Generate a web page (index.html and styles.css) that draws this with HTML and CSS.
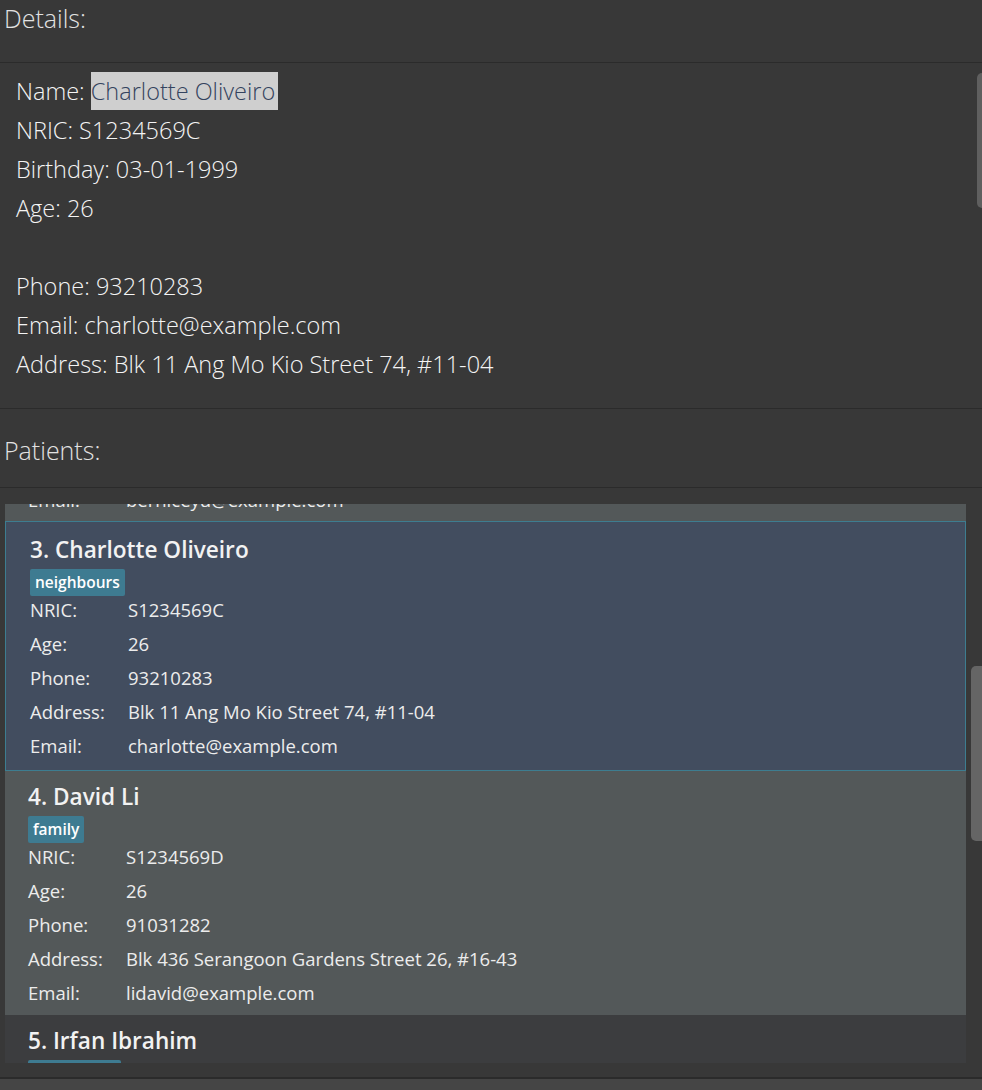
FILE: index.html
```html
<!DOCTYPE html>
<html>
<head>
<meta charset="utf-8">
<link rel="stylesheet" href="styles.css">
</head>
<body>
<div class="app">
  <div class="header header-details">Details:</div>
  <div class="details">
    <div class="details-text">
      <div class="line">Name: <span class="sel">Charlotte Oliveiro</span></div>
      <div class="line">NRIC: S1234569C</div>
      <div class="line">Birthday: 03-01-1999</div>
      <div class="line">Age: 26</div>
      <div class="line">&nbsp;</div>
      <div class="line">Phone: 93210283</div>
      <div class="line">Email: charlotte@example.com</div>
      <div class="line">Address: Blk 11 Ang Mo Kio Street 74, #11-04</div>
    </div>
    <div class="vbar vbar-details"><div class="thumb thumb-details"></div></div>
  </div>
  <div class="header header-patients">Patients:</div>
  <div class="list-area">
    <div class="viewport">
      <div class="list">
        <div class="cell cell-light cell-first">
          <div class="row row-cut"><span class="lbl">Email:</span><span>berniceyu@example.com</span></div>
        </div>
        <div class="cell cell-selected">
          <div class="title">3. Charlotte Oliveiro</div>
          <div class="tags"><span class="tag">neighbours</span></div>
          <div class="row"><span class="lbl">NRIC:</span><span>S1234569C</span></div>
          <div class="row"><span class="lbl">Age:</span><span>26</span></div>
          <div class="row"><span class="lbl">Phone:</span><span>93210283</span></div>
          <div class="row"><span class="lbl">Address:</span><span>Blk 11 Ang Mo Kio Street 74, #11-04</span></div>
          <div class="row"><span class="lbl">Email:</span><span>charlotte@example.com</span></div>
        </div>
        <div class="cell cell-light">
          <div class="title">4. David Li</div>
          <div class="tags"><span class="tag">family</span></div>
          <div class="row"><span class="lbl">NRIC:</span><span>S1234569D</span></div>
          <div class="row"><span class="lbl">Age:</span><span>26</span></div>
          <div class="row"><span class="lbl">Phone:</span><span>91031282</span></div>
          <div class="row"><span class="lbl">Address:</span><span>Blk 436 Serangoon Gardens Street 26, #16-43</span></div>
          <div class="row"><span class="lbl">Email:</span><span>lidavid@example.com</span></div>
        </div>
        <div class="cell cell-dark">
          <div class="title">5. Irfan Ibrahim</div>
          <div class="tags"><span class="tag">classmates</span></div>
        </div>
      </div>
    </div>
    <div class="vbar vbar-list"><div class="thumb thumb-list"></div></div>
  </div>
  <div class="footer"></div>
</div>
</body>
</html>
```
FILE: styles.css
```css
html, body {
  margin: 0;
  padding: 0;
  background: #383838;
}
.app {
  width: 982px;
  height: 1090px;
  display: flex;
  flex-direction: column;
  overflow: hidden;
  font-family: "Open Sans", "Noto Sans", sans-serif;
  color: #ffffff;
}
.header {
  box-sizing: border-box;
  background: #383838;
  border-bottom: 1px solid #2b2b2b;
  color: #e2e2e2;
  font-weight: 300;
  font-size: 25px;
  padding-left: 4px;
  flex: none;
}
.header-details {
  height: 63px;
  line-height: 36px;
}
.header-patients {
  height: 79px;
  padding-top: 23px;
  line-height: 36px;
}
.details {
  height: 346px;
  box-sizing: border-box;
  border-bottom: 1px solid #2b2b2b;
  display: flex;
  flex: none;
}
.details-text {
  flex: 1;
  padding: 9px 0 0 16px;
  font-weight: 300;
  font-size: 23.5px;
  line-height: 39px;
  color: #f4f4f4;
}
.sel {
  background: #cfcfcf;
  color: #34435e;
  display: inline-block;
  line-height: 38px;
  padding-right: 3px;
}
.vbar {
  flex: none;
  display: flex;
  flex-direction: column;
}
.vbar-details {
  width: 5px;
  padding-top: 10px;
}
.thumb {
  border-radius: 5px 0 0 5px;
}
.thumb-details {
  height: 135px;
  background: #5f5f5f;
}
.list-area {
  flex: none;
  height: 591px;
  box-sizing: border-box;
  border-bottom: 2px solid #2b2b2b;
  padding: 16px 0 0 5px;
  display: flex;
  gap: 5px;
}
.viewport {
  width: 961px;
  height: 559px;
  overflow: hidden;
  background: #3c3d3f;
  flex: none;
}
.vbar-list {
  width: 11px;
  padding-top: 162px;
}
.thumb-list {
  height: 175px;
  background: #656565;
}
.footer {
  flex: 1;
  background: #454545;
}
.cell {
  box-sizing: border-box;
  height: 244px;
  padding: 13px 0 0 23px;
}
.cell-first {
  height: 17px;
  padding-top: 0;
  overflow: hidden;
}
.row-cut {
  margin-top: -21px;
}
.cell-light {
  background: #535859;
}
.cell-dark {
  background: #3c3d3f;
}
.cell-selected {
  height: 250px;
  background: #424d5f;
  border: 1px solid #3d7d90;
  padding: 15px 0 0 24px;
}
.title {
  font-weight: 600;
  font-size: 22.6px;
  line-height: 26px;
  color: #f2f2f2;
}
.tags {
  display: flex;
  gap: 5px;
  margin-top: 6px;
  margin-bottom: -3px;
  height: 27px;
}
.tag {
  background: #3e7b91;
  color: #ffffff;
  font-weight: 600;
  font-size: 15.5px;
  line-height: 26px;
  padding: 0 5px;
  border-radius: 2px;
}
.row {
  display: flex;
  font-size: 18.5px;
  line-height: 34px;
  color: #ececec;
}
.lbl {
  width: 98px;
  flex: none;
}
```
